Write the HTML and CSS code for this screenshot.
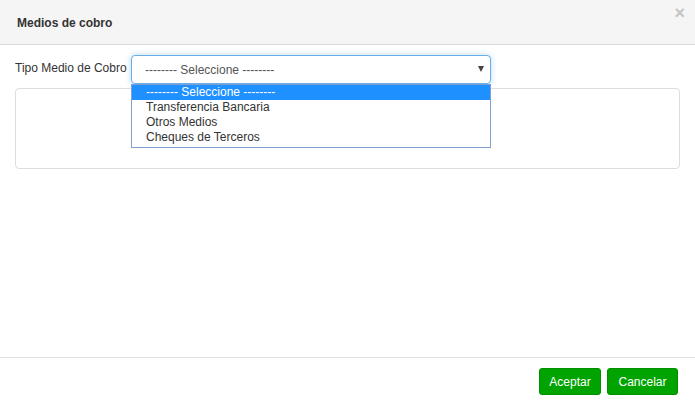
FILE: index.html
```html
<!DOCTYPE html>
<html lang="es">
<head>
<meta charset="utf-8">
<title>Medios de cobro</title>
<link rel="stylesheet" href="styles.css">
</head>
<body>
<div class="modal">
  <div class="modal-header">
    <h4 class="modal-title">Medios de cobro</h4>
    <span class="close">&times;</span>
  </div>
  <div class="modal-body">
    <div class="form-row">
      <label class="form-label">Tipo Medio de Cobro</label>
      <div class="select-wrap">
        <div class="select">
          <span class="select-text">-------- Seleccione --------</span>
          <span class="select-arrow"></span>
        </div>
        <ul class="dropdown">
          <li class="opt active">-------- Seleccione --------</li>
          <li class="opt">Transferencia Bancaria</li>
          <li class="opt">Otros Medios</li>
          <li class="opt">Cheques de Terceros</li>
        </ul>
      </div>
    </div>
    <div class="panel"></div>
  </div>
  <div class="modal-footer">
    <button class="btn btn-ok">Aceptar</button>
    <button class="btn btn-cancel">Cancelar</button>
  </div>
</div>
</body>
</html>
```
FILE: styles.css
```css
html, body {
  margin: 0;
  padding: 0;
  width: 695px;
  height: 401px;
  overflow: hidden;
  background: #fff;
  font-family: "Liberation Sans", Arial, sans-serif;
  font-size: 12px;
  color: #333;
}
.modal {
  width: 695px;
  height: 401px;
  display: flex;
  flex-direction: column;
}
.modal-header {
  height: 44px;
  background: #f5f5f5;
  border-bottom: 1px solid #d9d9d9;
  display: flex;
  align-items: center;
  justify-content: space-between;
  padding: 0 10px 0 17px;
  flex-shrink: 0;
}
.modal-title {
  margin: 0;
  font-size: 12px;
  font-weight: bold;
  color: #333;
  padding-top: 1px;
}
.close {
  align-self: flex-start;
  margin-top: 4px;
  font-size: 18px;
  font-weight: bold;
  line-height: 18px;
  color: #c4c4c4;
}
.modal-body {
  flex: 1;
  padding: 10px 15px 0 15px;
}
.form-row {
  display: flex;
  align-items: flex-start;
}
.form-label {
  width: 116px;
  padding-top: 6px;
  line-height: 14px;
}
.select-wrap {
  position: relative;
  width: 360px;
}
.select {
  height: 27px;
  border: 1px solid #66afe9;
  border-radius: 4px;
  box-shadow: 0 0 6px rgba(102, 175, 233, 0.45);
  display: flex;
  align-items: center;
  justify-content: space-between;
  padding: 0 6px 0 13px;
  color: #555;
  background: #fff;
}
.select-text {
  line-height: 14px;
  padding-top: 1px;
}
.select-arrow {
  width: 0;
  height: 0;
  border-left: 3px solid transparent;
  border-right: 3px solid transparent;
  border-top: 6px solid #444;
  margin-top: -2px;
}
.dropdown {
  position: absolute;
  left: 0;
  top: 29px;
  width: 358px;
  margin: 0;
  padding: 0 0 2px 0;
  list-style: none;
  border: 1px solid #7f9fd2;
  background: #fff;
  z-index: 5;
}
.opt {
  height: 15px;
  line-height: 15px;
  padding-left: 14px;
  color: #333;
}
.opt.active {
  background: #1e90ff;
  color: #fff;
}
.panel {
  margin-top: 4px;
  height: 79px;
  border: 1px solid #ddd;
  border-radius: 4px;
}
.modal-footer {
  flex-shrink: 0;
  border-top: 1px solid #e0e0e0;
  height: 44px;
  display: flex;
  justify-content: flex-end;
  align-items: flex-start;
  gap: 6px;
  padding: 10px 17px 0 0;
  box-sizing: border-box;
}
.btn {
  height: 27px;
  padding: 0;
  background: #00a300;
  border: 1px solid #009000;
  border-radius: 3px;
  color: #fff;
  font-family: "Liberation Sans", Arial, sans-serif;
  font-size: 12px;
  cursor: pointer;
}
.btn-ok {
  width: 62px;
}
.btn-cancel {
  width: 71px;
}
```
